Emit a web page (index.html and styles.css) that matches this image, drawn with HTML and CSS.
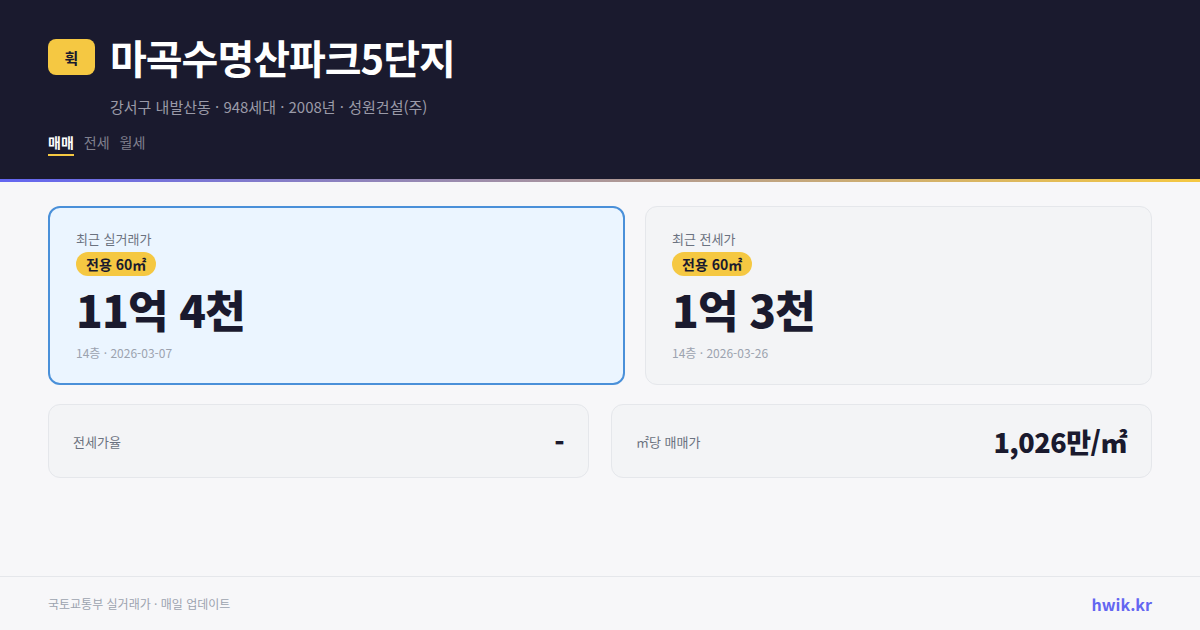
FILE: index.html
```html
<!DOCTYPE html>
<html lang="ko">
<head>
<meta charset="utf-8">
<link rel="stylesheet" href="styles.css">
</head>
<body>
<header class="hero">
  <div class="title-row">
    <span class="logo">휙</span>
    <h1 class="title">마곡수명산파크5단지</h1>
  </div>
  <p class="meta">강서구 내발산동 · 948세대 · 2008년 · 성원건설(주)</p>
  <nav class="tabs">
    <span class="tab active">매매</span>
    <span class="tab">전세</span>
    <span class="tab">월세</span>
  </nav>
</header>
<div class="accent"></div>
<main class="content">
  <div class="top-row">
    <section class="card primary">
      <div class="label">최근 실거래가</div>
      <span class="badge">전용 60㎡</span>
      <div class="price">11억 4천</div>
      <div class="sub">14층 · 2026-03-07</div>
    </section>
    <section class="card">
      <div class="label">최근 전세가</div>
      <span class="badge">전용 60㎡</span>
      <div class="price">1억 3천</div>
      <div class="sub">14층 · 2026-03-26</div>
    </section>
  </div>
  <div class="bottom-row">
    <section class="stat">
      <span class="stat-label">전세가율</span>
      <span class="stat-value">-</span>
    </section>
    <section class="stat">
      <span class="stat-label">㎡당 매매가</span>
      <span class="stat-value">1,026만/㎡</span>
    </section>
  </div>
</main>
<footer class="footer">
  <span class="source">국토교통부 실거래가 · 매일 업데이트</span>
  <span class="brand">hwik.kr</span>
</footer>
</body>
</html>
```
FILE: styles.css
```css
* { box-sizing: border-box; }
html, body { margin: 0; padding: 0; }
body {
  width: 1200px;
  height: 630px;
  overflow: hidden;
  background: #f7f7f9;
  font-family: "Noto Sans CJK KR", "Noto Sans", sans-serif;
  color: #1a1a2e;
  display: flex;
  flex-direction: column;
}
.hero {
  background: #1a1a2e;
  height: 179px;
  padding: 33px 48px 0;
}
.title-row {
  display: flex;
  align-items: center;
  gap: 15px;
}
.logo {
  width: 47px;
  height: 36px;
  border-radius: 8px;
  background: #f5c842;
  color: #1a1a2e;
  font-size: 15px;
  font-weight: 700;
  display: flex;
  align-items: center;
  justify-content: center;
}
.title {
  margin: 0;
  color: #ffffff;
  font-size: 40px;
  font-weight: 700;
  line-height: 48px;
  letter-spacing: -1px;
}
.meta {
  margin: 15px 0 0 62px;
  color: #9a9aa8;
  font-size: 15px;
  line-height: 22px;
}
.tabs {
  display: flex;
  gap: 10px;
  margin-top: 14px;
}
.tab {
  color: #80808e;
  font-size: 14px;
  line-height: 20px;
  padding-bottom: 2px;
  border-bottom: 2px solid transparent;
}
.tab.active {
  color: #ffffff;
  font-weight: 700;
  border-bottom-color: #f5c842;
}
.accent {
  height: 3px;
  background: linear-gradient(90deg, #6366f1 0%, #f5c842 100%);
}
.content {
  flex: 1;
  padding: 24px 48px 0;
  display: flex;
  flex-direction: column;
  gap: 19px;
}
.top-row {
  display: grid;
  grid-template-columns: 577fr 507fr;
  gap: 20px;
}
.card {
  height: 179px;
  border-radius: 12px;
  background: #f3f4f6;
  border: 1px solid #e5e7eb;
  padding: 22px 26px 0;
  display: flex;
  flex-direction: column;
  align-items: flex-start;
}
.card.primary {
  background: #ebf5ff;
  border: 2px solid #4a90d9;
  padding: 21px 26px 0;
}
.label {
  color: #6b7280;
  font-size: 13px;
  line-height: 20px;
}
.badge {
  margin-top: 3px;
  background: #f5c842;
  color: #1a1a2e;
  font-size: 14px;
  font-weight: 700;
  line-height: 24px;
  padding: 0 10px;
  border-radius: 12px;
}
.price {
  margin-top: 6px;
  font-size: 44px;
  font-weight: 800;
  line-height: 54px;
  letter-spacing: -0.8px;
  color: #1a1a2e;
}
.sub {
  margin-top: 8px;
  color: #9ca3af;
  font-size: 12px;
  line-height: 18px;
}
.bottom-row {
  display: grid;
  grid-template-columns: 1fr 1fr;
  gap: 22px;
}
.stat {
  height: 74px;
  border-radius: 12px;
  background: #f3f4f6;
  border: 1px solid #e5e7eb;
  padding: 0 24px;
  display: flex;
  align-items: center;
  justify-content: space-between;
}
.stat-label {
  color: #6b7280;
  font-size: 13px;
}
.stat-value {
  font-size: 27px;
  font-weight: 800;
  color: #1a1a2e;
  letter-spacing: -0.5px;
}
.footer {
  height: 54px;
  border-top: 1px solid #e5e7eb;
  padding: 0 48px;
  display: flex;
  align-items: center;
  justify-content: space-between;
}
.source {
  color: #9ca3af;
  font-size: 12px;
}
.brand {
  color: #6366f1;
  font-size: 16px;
  font-weight: 700;
}
```
